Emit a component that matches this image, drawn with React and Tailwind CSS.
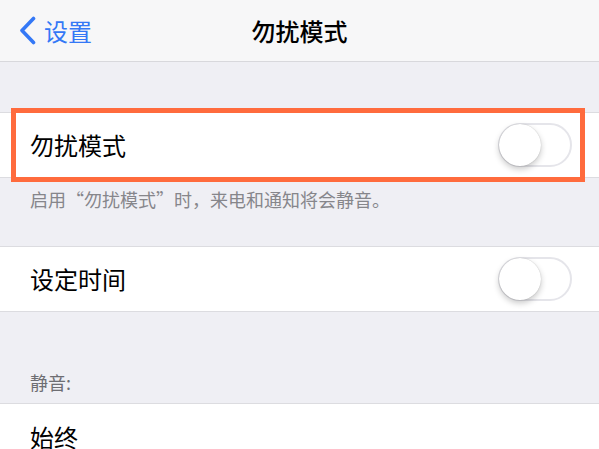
import React from "react";

function Toggle() {
  return (
    <div className="relative h-[44px] w-[74px] rounded-full border-[2px] border-[#e5e5ea] bg-white">
      <div className="absolute left-[-1px] top-[-1px] h-[42px] w-[42px] rounded-full bg-white shadow-[0_3px_6px_rgba(0,0,0,0.22),0_0_1px_rgba(0,0,0,0.25)]" />
    </div>
  );
}

export default function App() {
  return (
    <div
      className="relative h-[449px] w-[599px] overflow-hidden bg-[#efeff4]"
      style={{ fontFamily: '"Noto Sans CJK SC", "Noto Sans", sans-serif' }}
    >
      {/* Nav bar */}
      <div className="relative flex h-[62px] items-center border-b border-[#d8d8dc] bg-[#f7f7f8]">
        <div className="flex items-center pl-[18px] text-[24px] leading-none text-[#3478f6]">
          <svg width="19" height="29" viewBox="0 0 19 29" className="mr-[7px]">
            <path d="M15.5 2.5 L4 14.5 L15.5 26.5" fill="none" stroke="#3478f6" strokeWidth="3.6" strokeLinecap="round" strokeLinejoin="round" />
          </svg>
          <span>设置</span>
        </div>
        <div className="absolute left-0 right-0 top-0 flex h-[62px] items-center justify-center text-[24px] font-medium leading-none text-black">
          勿扰模式
        </div>
      </div>

      <div className="h-[50px]" />

      {/* Row 1 */}
      <div className="flex h-[66px] items-center justify-between border-y border-[#dcdce0] bg-white pl-[30px] pr-[27px]">
        <span className="text-[24px] leading-none text-black">勿扰模式</span>
        <Toggle />
      </div>

      <div className="h-[68px] pl-[30px] pt-[12px] text-[18px] leading-none text-[#86868b]">
        启用“勿扰模式”时，来电和通知将会静音。
      </div>

      {/* Row 2 */}
      <div className="flex h-[66px] items-center justify-between border-y border-[#dcdce0] bg-white pl-[30px] pr-[27px]">
        <span className="text-[24px] leading-none text-black">设定时间</span>
        <Toggle />
      </div>

      <div className="flex h-[91px] items-end pb-[12px] pl-[30px] text-[18px] leading-none text-[#6d6d72]">
        静音:
      </div>

      {/* Row 3 */}
      <div className="flex h-[66px] items-center border-t border-[#dcdce0] bg-white pl-[30px]">
        <span className="text-[24px] leading-none text-black">始终</span>
      </div>

      {/* Orange highlight annotation */}
      <div className="pointer-events-none absolute left-[11px] top-[108px] h-[74px] w-[574px] border-[5px] border-[#ff6b3d]" />
    </div>
  );
}
